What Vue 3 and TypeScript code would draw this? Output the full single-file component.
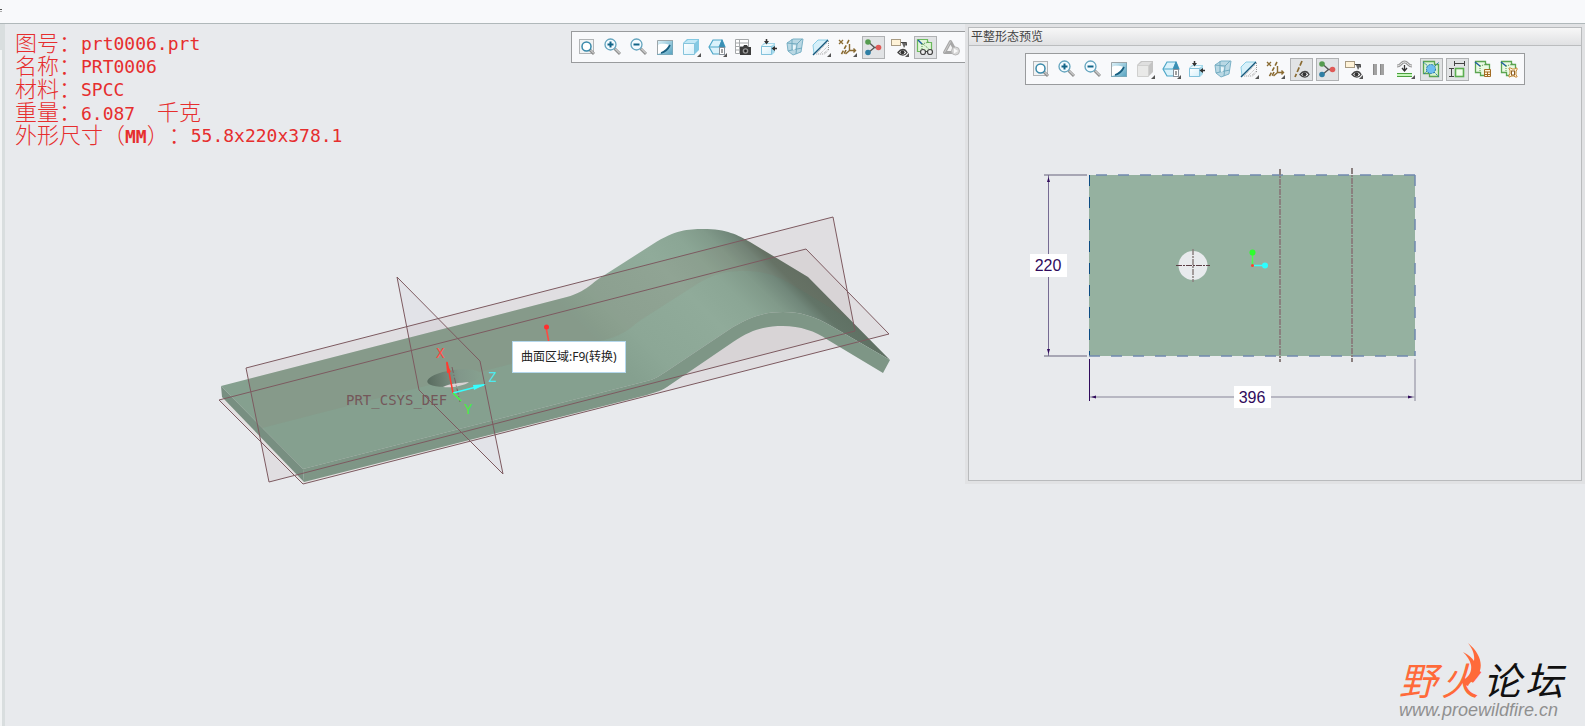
<script setup lang="ts">
interface Tool {
  icon: string
  label: string
  pressed?: boolean
}

interface InfoLine {
  label: string
  value: string
  unit?: string
}

const info: InfoLine[] = [
  { label: '图号：', value: 'prt0006.prt' },
  { label: '名称：', value: 'PRT0006' },
  { label: '材料：', value: 'SPCC' },
  { label: '重量：', value: '6.087  ', unit: '千克' },
]

const mainTools: Tool[] = [
  { icon: 'refit', label: '重新调整' },
  { icon: 'zoom-in', label: '放大' },
  { icon: 'zoom-out', label: '缩小' },
  { icon: 'repaint', label: '重画' },
  { icon: 'shading', label: '显示样式' },
  { icon: 'views', label: '已保存方向' },
  { icon: 'manager', label: '视图管理器' },
  { icon: 'normal', label: '视图法向' },
  { icon: 'perspective', label: '透视图' },
  { icon: 'section', label: '截面' },
  { icon: 'datum', label: '基准显示过滤器' },
  { icon: 'spin', label: '旋转中心', pressed: true },
  { icon: 'notes', label: '注释显示过滤器' },
  { icon: 'preview', label: '平整形态预览', pressed: true },
  { icon: 'simulate', label: '仿真' },
]

const previewTools: Tool[] = [
  { icon: 'refit', label: '重新调整' },
  { icon: 'zoom-in', label: '放大' },
  { icon: 'zoom-out', label: '缩小' },
  { icon: 'repaint', label: '重画' },
  { icon: 'shading-off', label: '显示样式' },
  { icon: 'views', label: '已保存方向' },
  { icon: 'normal', label: '视图法向' },
  { icon: 'perspective', label: '透视图' },
  { icon: 'section', label: '截面' },
  { icon: 'datum', label: '基准显示过滤器' },
  { icon: 'axis', label: '轴显示', pressed: true },
  { icon: 'spin', label: '旋转中心', pressed: true },
  { icon: 'notes', label: '注释显示过滤器' },
  { icon: 'pause', label: '暂停' },
  { icon: 'flatten', label: '展平' },
  { icon: 'stamp', label: '固定几何', pressed: true },
  { icon: 'dims', label: '边界框尺寸', pressed: true },
  { icon: 'table', label: '折弯顺序表' },
  { icon: 'outline', label: '轮廓' },
]
</script>

<template>
  <div class="app">
    <svg class="sprite" aria-hidden="true">
      <defs>
        <linearGradient id="g-blue" x1="0" y1="0" x2="1" y2="1">
          <stop offset="0" stop-color="#e4f5fb" /><stop offset="1" stop-color="#4f9fbe" />
        </linearGradient>
        <linearGradient id="g-face" x1="0" y1="0" x2="1" y2="1">
          <stop offset="0" stop-color="#ffffff" /><stop offset="1" stop-color="#d5effa" />
        </linearGradient>
      </defs>
      <symbol id="refit" viewBox="0 0 21 21">
        <rect x="2.5" y="2.5" width="14" height="14" fill="#f1f3f4" stroke="#b1b4b6" />
        <path d="M12.5 12.5l4.500 4.500" stroke="#8f8f8f" stroke-width="3" /><path d="M13 12.500l4 4" stroke="#e8e8e8" />
        <circle cx="9.500" cy="9.500" r="4.500" fill="#fff" stroke="#3989aa" stroke-width="1.500" />
      </symbol>
      <symbol id="zoom-in" viewBox="0 0 21 21">
        <path d="M11.500 11.500l5.500 5.500" stroke="#929292" stroke-width="3" /><path d="M12 11.500l5 5" stroke="#eee" />
        <circle cx="7.500" cy="7.500" r="5.500" fill="#f4fbff" stroke="#63a4be" stroke-width="1.300" />
        <path d="M4.500 7.500h6M7.500 4.500v6" stroke="#126488" stroke-width="2" />
      </symbol>
      <symbol id="zoom-out" viewBox="0 0 21 21">
        <path d="M11.500 11.500l5.500 5.500" stroke="#929292" stroke-width="3" /><path d="M12 11.500l5 5" stroke="#eee" />
        <circle cx="7.500" cy="7.500" r="5.500" fill="#f4fbff" stroke="#63a4be" stroke-width="1.300" />
        <path d="M4.500 7.500h6" stroke="#126488" stroke-width="2" />
      </symbol>
      <symbol id="repaint" viewBox="0 0 21 21">
        <rect x="2" y="3" width="16" height="15" fill="url(#g-blue)" />
        <path d="M3 8c3-2 8-1 12 0-2 4-5 7-9 8L3 17z" fill="#fff" />
        <path d="M2.500 18V3.500H18" fill="none" stroke="#9da5a8" /><path d="M2 17.500h16M17.500 4v14" stroke="#79a9bb" />
        <path d="M15 8c-2 4-5 7-9 8" fill="none" stroke="#185f80" stroke-width="1.800" />
      </symbol>
      <symbol id="shading" viewBox="0 0 21 21">
        <path d="M2 6l4-4h12v11l-4 4H2z" fill="#83c9e3" /><path d="M2.500 6.500h11v11h-11z" fill="url(#g-face)" stroke="#86c4dc" />
        <path d="M3 6l4-3h10l-3 3z" fill="#c2e8f6" /><path d="M20 16v4h-4z" fill="#555" />
      </symbol>
      <symbol id="shading-off" viewBox="0 0 21 21">
        <path d="M2 6l4-4h12v11l-4 4H2z" fill="#c4c4c4" /><path d="M2.500 6.500h11v11h-11z" fill="#e9e9e8" stroke="#d0d0cf" />
        <path d="M3 6l4-3h10l-3 3z" fill="#dfdfdf" /><path d="M20 16v4h-4z" fill="#555" />
      </symbol>
      <symbol id="views" viewBox="0 0 21 21">
        <path d="M2 10l4-7h9l3 7-4 7H6z" fill="#daf2fb" stroke="#4ca6c7" stroke-width="1.200" />
        <path d="M2 10h10M12 10l3-7v13" fill="none" stroke="#4ca6c7" /><path d="M12 10l3-8 3 8z" fill="#3a8fb4" />
        <rect x="12.500" y="10.500" width="5" height="7" fill="#fff" stroke="#88919a" /><path d="M14 13h2M14 15h2" stroke="#444" />
        <path d="M20 16v4h-4z" fill="#555" />
      </symbol>
      <symbol id="manager" viewBox="0 0 21 21">
        <path d="M2.500 2.500h13v14h-13zM2 6h14M2 9.500h14M2 13h14M6.500 2v15" fill="#fff" stroke="#a5a8aa" />
        <path d="M7 10h3l1-2h3l1 2h3v8H7z" fill="#3d3d3d" /><circle cx="12.500" cy="14" r="2.800" fill="#999" /><circle cx="12.500" cy="14" r="1.400" fill="#222" />
      </symbol>
      <symbol id="normal" viewBox="0 0 21 21">
        <path d="M2 9l3-3h11v9l-3 3H2z" fill="#a5d8ea" /><path d="M2.500 9.500h10v8h-10z" fill="url(#g-face)" stroke="#83c2dc" /><path d="M3 9l3-2h9l-3 2z" fill="#f0fafd" />
        <path d="M7.500 2v4M18 11.500h-4" stroke="#333" stroke-width="1.500" /><path d="M5 4h5l-2.500 3.500zM16 9v5l-3.500-2.500z" fill="#333" />
      </symbol>
      <symbol id="perspective" viewBox="0 0 21 21">
        <path d="M2 6l6-4h10l-2 13-8 3-5-4z" fill="#b9d8e4" stroke="#7bb2c7" /><path d="M2 6l10 1 5-5M12 7l-1 10M7 2v11l-4 1M7 13l10-2" fill="none" stroke="#72abc0" />
        <path d="M8 8l3 .5-1 4-2 .5z" fill="#eaf6fa" />
      </symbol>
      <symbol id="section" viewBox="0 0 21 21">
        <path d="M2 8l5-5h10L3 17z" fill="#d6f0fa" stroke="#8acde4" /><path d="M17.500 4v9l-4 4H5" fill="none" stroke="#999" stroke-dasharray="1 1" />
        <path d="M8 14l8-8M10 16l7-7M6 16l3-3M13 16l4-4" stroke="#bbb" stroke-dasharray="1 1" />
        <path d="M2 18L17 3" stroke="#16597c" stroke-width="1.500" /><path d="M20 16v4h-4z" fill="#555" />
      </symbol>
      <symbol id="datum" viewBox="0 0 21 21">
        <path d="M2 3l4 4M6 3L2 7" stroke="#8a6b32" stroke-width="1.300" /><path d="M12 3L4 18M9 13l-2 4" stroke="#8a6b32" stroke-width="1.600" stroke-dasharray="4 2" />
        <path d="M12.500 7v6.500h6M12.500 13.500l-4 3.500M16.500 11.500l2 2-2 2" fill="none" stroke="#8a6b32" stroke-width="1.400" /><path d="M20 16v4h-4z" fill="#555" />
      </symbol>
      <symbol id="spin" viewBox="0 0 21 21">
        <path d="M5.500 5l6 5.500-6 5M11.500 10.500h5" fill="none" stroke="#555" stroke-width="1.300" />
        <circle cx="5" cy="5" r="2.800" fill="#559b4f" /><circle cx="5" cy="15.500" r="2.800" fill="#2f7fa4" /><circle cx="15.500" cy="10.500" r="2.800" fill="#df5a57" />
      </symbol>
      <symbol id="notes" viewBox="0 0 21 21">
        <rect x="2.500" y="2.500" width="9" height="6" fill="#fff3d8" stroke="#a89b83" /><path d="M12 5.500h5.500v3" fill="none" stroke="#444" /><path d="M13 6h5l-3 5z" fill="#666" />
        <path d="M9 15.500c3-4 7-4 9 0-2 3.500-6 3.500-9 0z" fill="#fff" stroke="#444" stroke-width="1.300" /><circle cx="13.500" cy="15.300" r="2" fill="#333" /><path d="M20 16v4h-4z" fill="#555" />
      </symbol>
      <symbol id="preview" viewBox="0 0 21 21">
        <path d="M2.500 2.500h10v3h4v9h-14z" fill="#e2f6da" stroke="#6cba5d" stroke-width="1.200" /><path d="M3 3l4 4" stroke="#1d5da0" stroke-width="1.500" /><path d="M7 7l7-2M7 7v7M8 7l6 5" stroke="#579450" stroke-dasharray="1 1" />
        <circle cx="8" cy="15" r="2.500" fill="#eee" stroke="#444" stroke-width="1.200" /><circle cx="15" cy="15" r="2.500" fill="#eee" stroke="#444" stroke-width="1.200" /><path d="M10 14.500h3" stroke="#444" />
      </symbol>
      <symbol id="simulate" viewBox="0 0 21 21">
        <path d="M9.500 4.500l-6 11h12z" fill="#f3f3f3" stroke="#a7a7a7" stroke-width="3" stroke-linejoin="round" /><path d="M9.500 4.500l-6 11" stroke="#ccc" />
        <circle cx="14.500" cy="14" r="4" fill="#d8d8d8" stroke="#b8b8b8" /><path d="M13 11.500l4 2.500-4 2.500z" fill="#fafafa" />
      </symbol>
      <symbol id="axis" viewBox="0 0 21 21">
        <path d="M11 2L4 18" stroke="#8a6b32" stroke-width="1.700" stroke-dasharray="5 2" />
        <path d="M9 15.500c3-4 7-4 9 0-2 3.500-6 3.500-9 0z" fill="#fff" stroke="#444" stroke-width="1.300" /><circle cx="13.500" cy="15.300" r="2" fill="#333" />
      </symbol>
      <symbol id="pause" viewBox="0 0 21 21">
        <path d="M4 5h4v11H4zM11 5h4v11h-4z" fill="#a2a2a2" /><path d="M4 5h1v11H4zM11 5h1v11h-1z" fill="#888" />
      </symbol>
      <symbol id="flatten" viewBox="0 0 21 21">
        <path d="M2 7c4 0 4-4 7.500-4S13 7 17 7" fill="none" stroke="#999" stroke-width="3" /><path d="M2 7c4 0 4-4 7.500-4S13 7 17 7" fill="none" stroke="#e4e4e4" />
        <path d="M9.500 6v6M7 9l2.500 3L12 9" stroke="#333" stroke-width="1.300" fill="none" /><path d="M2 14.500h15M2 17.500h15" stroke="#4a9f3e" /><path d="M2 16h15" stroke="#c6f7ba" stroke-width="2" /><path d="M20 16v4h-4z" fill="#555" />
      </symbol>
      <symbol id="stamp" viewBox="0 0 21 21">
        <path d="M2.500 2.500h11v3h4v12h-9v-3h-6z" fill="#d8f3cf" stroke="#5ba551" stroke-width="1.300" /><path d="M2 3l5 4M13 13l5 5M14 7l4-4M3 15l4-4" stroke="#2776ad" stroke-dasharray="2 1" />
        <circle cx="10" cy="10" r="4.500" fill="#6dbdf0" stroke="#2876a8" stroke-dasharray="2 1" />
      </symbol>
      <symbol id="dims" viewBox="0 0 21 21">
        <rect x="8.500" y="9.500" width="8" height="8" fill="#effde9" stroke="#5bae50" stroke-width="1.600" />
        <path d="M7.500 2v5M17.500 2v5M8 4.500h10M2 9.500h5M2 17.500h5M4.500 9v9" stroke="#444" />
      </symbol>
      <symbol id="table" viewBox="0 0 21 21">
        <path d="M2.500 2.500h10v3h4v8h-4v3h-5v-3h-5z" fill="#e9f9e3" stroke="#5ba551" stroke-width="1.300" /><path d="M2 3l5 4" stroke="#1d5da0" stroke-width="1.500" /><path d="M7 7l7-2M7 7v6" stroke="#579450" stroke-dasharray="1 1" />
        <path d="M11.500 10.500h6v7h-6zM11 13h7M11 15.500h7M14.500 13v5" fill="#fff2da" stroke="#a36c24" />
      </symbol>
      <symbol id="outline" viewBox="0 0 21 21">
        <path d="M2.500 2.500h10v3h4v8h-4v3h-5v-3h-5z" fill="#e9f9e3" stroke="#5ba551" stroke-width="1.300" /><path d="M2 3l5 4" stroke="#1d5da0" stroke-width="1.500" /><path d="M7 7l7-2M7 7v6" stroke="#579450" stroke-dasharray="1 1" />
        <path d="M10 9h2l1 1h3l1-1h1v2l-1 1v4l1 1v1h-2l-1-1h-3l-1 1h-1v-2l1-1v-4l-1-1z" fill="#fff2da" stroke="#c98d3c" /><rect x="12.500" y="12" width="3" height="4" fill="#fff" stroke="#8c5e22" />
      </symbol>
    </svg>

    <header class="topbar"><span class="tick"></span></header>

    <div class="workspace">
      <main class="stage">
        <div class="rail"></div>
        <section class="viewport" aria-label="零件视图">
          <svg class="drawing" viewBox="5 24 960 702" role="img" aria-label="PRT0006">
            <defs>
              <linearGradient id="skin" gradientUnits="userSpaceOnUse" x1="221" y1="386" x2="571" y2="36">
                <stop offset="0" stop-color="#85a08f" /><stop offset="0.600" stop-color="#85a08f" />
                <stop offset="0.670" stop-color="#8ca796" /><stop offset="0.800" stop-color="#90ab9a" />
                <stop offset="0.865" stop-color="#8ba695" /><stop offset="0.910" stop-color="#819a8a" />
                <stop offset="0.945" stop-color="#71877a" /><stop offset="0.965" stop-color="#627467" />
                <stop offset="1" stop-color="#5f7063" />
              </linearGradient>
              <linearGradient id="bore" x1="0" x2="1" y1="0" y2="0">
                <stop offset="0" stop-color="#586b5f" /><stop offset="0.250" stop-color="#6a7d70" />
                <stop offset="0.600" stop-color="#81978a" /><stop offset="1" stop-color="#86a08f" />
              </linearGradient>
              <clipPath id="far-half">
                <path d="M221 386L563 298C585 293 590 284 603 276L653 244C675 230 688 229 703 229C727 229 738 235 750 242L808 277L849 319L791 284C779 277 768 271 744 271C729 271 716 272 694 286L644 318C631 326 626 335 604 340L262 428Z" />
              </clipPath>
            </defs>
            <g class="plane">
              <path d="M246 368L833 217L855 331L269 482Z" />
              <path d="M219 400L806 249L889 334L303 484Z" />
              <path class="faint" d="M397 277L480 361L503 474L419 390Z" />
            </g>
            <path d="M222 398L303 483L655 393" fill="none" stroke="#e3e1e0" stroke-width="2" />
            <path fill="url(#skin)" d="M221 386L563 298C585 293 590 284 603 276L653 244C675 230 688 229 703 229C727 229 738 235 750 242L808 277L890 360L833 327C815 316 800 312 783 312C765 312 752 316 733 327L667 371C658 377 655 379 647 381L303 469Z" />
            <path fill="#788f81" d="M221 386L303 469L304 482L222 397Z" />
            <path fill="#7e9686" d="M303 469L647 381C655 379 658 377 667 371L733 327C752 316 765 312 783 312C800 312 815 316 833 327L890 360L883 373L828 340C815 331 800 326 783 326C766 326 752 329 733 342L667 387C659 392 655 392 647 395L304 482Z" />
            <path class="tint" clip-path="url(#far-half)" d="M246 368L833 217L855 331L269 482Z" />
            <ellipse cx="454" cy="378" rx="27" ry="8" transform="rotate(-8 454 378)" fill="url(#bore)" />
            <path d="M443 387C450 383 460 383 469 382C464 386 452 388 443 387Z" fill="#d9d3d4" />
            <g class="plane-edge">
              <path d="M246 368L833 217L855 331L269 482Z" />
              <path d="M219 400L806 249L889 334L303 484Z" />
              <path d="M397 277L480 361L503 474L419 390Z" />
              <path d="M452 367L460 402" stroke-dasharray="6 2 1 2" />
            </g>
            <text class="csys" x="346" y="405">PRT_CSYS_DEF</text>
            <g fill="none" stroke-width="1.500">
              <path d="M453 393L447 362" stroke="#ff3b30" /><path d="M453 393L484 385" stroke="#35ffff" /><path d="M453 393L461 401" stroke="#3cff3c" />
            </g>
            <path d="M446 361L451 372L447 373Z" fill="#ff3b30" /><path d="M486 384L473 385L474 390Z" fill="#35ffff" />
            <text class="axis-name" x="436" y="358" fill="#ff4a42">X</text>
            <text class="axis-name" x="488" y="382" fill="#4fe9ee">Z</text>
            <text class="axis-name" x="464" y="414" fill="#45ee45">Y</text>
            <path d="M546 327L549 343" stroke="#ff4a42" stroke-width="1.500" /><circle cx="546.500" cy="327" r="2.500" fill="#ff2f2f" />
          </svg>

          <dl class="info">
            <div v-for="line in info" :key="line.label" class="row">
              <dt>{{ line.label }}</dt>
              <dd>{{ line.value }}<span v-if="line.unit" class="unit">{{ line.unit }}</span></dd>
            </div>
            <div class="row">
              <dt>外形尺寸（<b>MM</b>）：</dt>
              <dd>55.8x220x378.1</dd>
            </div>
          </dl>

          <div class="toolbar open-end" role="toolbar" aria-label="图形工具栏">
            <button v-for="tool in mainTools" :key="tool.icon" type="button" :class="{ pressed: tool.pressed }" :aria-label="tool.label" :aria-pressed="tool.pressed">
              <svg><use :href="'#' + tool.icon" /></svg>
            </button>
          </div>

          <div class="tip" role="tooltip">曲面区域:F9(转换)</div>
        </section>
      </main>

      <aside class="dock">
        <section class="panel">
          <h2>平整形态预览</h2>
          <div class="bar">
            <div class="toolbar" role="toolbar" aria-label="预览工具栏">
              <button v-for="tool in previewTools" :key="tool.icon" type="button" :class="{ pressed: tool.pressed }" :aria-label="tool.label" :aria-pressed="tool.pressed">
                <svg><use :href="'#' + tool.icon" /></svg>
              </button>
            </div>
          </div>
          <svg class="drawing" viewBox="969 85 612 395" role="img" aria-label="展平尺寸 396 × 220">
            <rect x="1089" y="175" width="326" height="181" fill="#95b1a0" />
            <g fill="none" stroke-dasharray="11 11">
              <path d="M1089.500 175V356" stroke="#0b4b82" />
              <path d="M1096 175H1415M1089 356H1415M1415 175V356" stroke="#7089ae" stroke-width="1.500" />
            </g>
            <circle cx="1193" cy="265.500" r="14.500" fill="#e8eaed" />
            <g fill="none" stroke="#8a807f" stroke-width="2" stroke-dasharray="6 1 2 1">
              <path d="M1280 169V362M1352 168V362" />
              <path d="M1193 249V282" stroke-width="1.500" />
              <path d="M1176 265.500H1210" stroke="#5d3e46" stroke-width="1" />
            </g>
            <g fill="none" stroke="#a7a6b4" stroke-width="2">
              <path d="M1044 175H1087M1044 356H1087" /><path d="M1415 359V401M1090 397H1415" stroke-width="1.500" />
              <path d="M1048.500 175V356" stroke="#766b93" stroke-width="1" /><path d="M1089.500 359V401" stroke="#300b5c" stroke-width="1" />
            </g>
            <path d="M1047 182L1048.500 177L1050 182ZM1047 349L1048.500 354L1050 349ZM1096 395.500L1091 397L1096 398.500ZM1408 395.500L1413 397L1408 398.500Z" fill="#300b5c" />
            <path d="M1252.500 265V254" stroke="#4dff4d" stroke-width="1.500" /><path d="M1253 265.500H1265" stroke="#35ffff" stroke-width="1.500" />
            <circle cx="1252.500" cy="265.500" r="1.500" fill="#ff4030" /><circle cx="1252.500" cy="252.500" r="3" fill="#2dff2d" /><circle cx="1265" cy="265.500" r="3" fill="#2dffff" />
            <rect x="1030" y="254" width="37" height="23" fill="#fff" /><rect x="1234" y="386" width="37" height="22" fill="#fff" />
            <text class="dim" x="1048" y="271">220</text><text class="dim" x="1252" y="403">396</text>
          </svg>
        </section>
      </aside>

      <a class="brand" href="#" aria-label="野火论坛 www.proewildfire.cn">
        <span class="name">
          <span class="fire">野</span><span class="fire">火</span><span>论</span><span>坛</span>
          <svg class="flame" viewBox="0 0 20 44"><path d="M5 0C17 10 21 22 15 32C11 37 7 39 5 43C1 42-1 39 1 37C6 33 9 29 8 22C7 17 4 13 0 9C6 12 9 15 11 18C12 11 9 5 5 0Z" fill="#ff6a3a" /></svg>
        </span>
        <span class="url">www.proewildfire.cn</span>
      </a>
    </div>
  </div>
</template>

<style>
html,
body {
  background: #e8eaed;
}
</style>

<style scoped>
.app {
  min-height: 100vh;
  display: flex;
  flex-direction: column;
  overflow: hidden;
  font-family: "Noto Sans", "Noto Sans CJK SC", sans-serif;
  background: #e8eaed;
}

.sprite {
  position: absolute;
  width: 0;
  height: 0;
}

.topbar {
  height: 14px;
  padding-top: 9px;
  border-bottom: 1px solid #b0b8ba;
  background: #f8f9fb;
}

.tick {
  display: block;
  width: 2px;
  height: 1px;
  border-top: 1px solid #555;
  border-bottom: 1px solid #aaa;
}

.workspace {
  position: relative;
  flex: 1;
  display: grid;
  grid-template-columns: 193fr 124fr;
  align-items: start;
}

.stage {
  display: flex;
  align-self: stretch;
  min-width: 0;
}

.rail {
  width: 3px;
  margin-top: 26px;
  border-left: 2px solid #f2f4f5;
  background: #d9dedf;
  box-shadow: 0 -26px 0 #d9dedf;
}

.viewport {
  position: relative;
  flex: 1;
  min-width: 0;
}

.drawing {
  display: block;
  width: 100%;
}

.plane {
  fill: rgba(143, 112, 108, 0.09);
}

.plane .faint {
  fill: rgba(143, 120, 150, 0.06);
}

.tint {
  fill: rgba(143, 100, 92, 0.09);
}

.plane-edge {
  fill: none;
  stroke: #7d5a60;
  stroke-width: 1;
}

.csys,
.axis-name {
  font-family: "DejaVu Sans Mono", monospace;
  font-size: 14px;
}

.csys {
  fill: #74575a;
}

.info {
  position: absolute;
  top: 8px;
  left: 10px;
  margin: 0;
  color: #e62e2e;
  font: 18px/23px "DejaVu Sans Mono", "Noto Sans CJK SC", monospace;
  text-spacing-trim: space-all;
}

.row {
  display: flex;
  height: 23px;
}

dt,
dd {
  margin: 0;
  white-space: pre;
}

dt,
.unit {
  font-size: 22px;
  font-weight: 300;
}

dt b {
  font-size: 18px;
  font-weight: 700;
}

.toolbar {
  display: flex;
  gap: 3px;
  padding: 4px 3px 3px 4px;
  border: 1px solid #999b9d;
  background: #f8f9fb;
}

.open-end {
  position: absolute;
  top: 7px;
  right: 0;
  padding-right: 2px;
  border-right: 0;
}

.toolbar button {
  width: 23px;
  height: 23px;
  padding: 0;
  border: 1px solid transparent;
  background: transparent;
}

.toolbar button.pressed {
  border-color: #b0b2b4;
  background: #e1e3e5;
}

.toolbar svg {
  display: block;
  width: 21px;
  height: 21px;
}

.tip {
  position: absolute;
  top: 317px;
  left: 507px;
  padding: 0 8px;
  border: 1px solid #b4d7ec;
  background: #fff;
  color: #222;
  font-size: 12px;
  line-height: 30px;
  white-space: nowrap;
}

.dock {
  padding: 3px;
  background: #e1e2e4;
}

.panel {
  border: 1px solid #b9bbbd;
  background: #e8eaed;
}

h2 {
  height: 17px;
  margin: 0;
  padding-left: 2px;
  border-bottom: 1px solid #bbbdbf;
  background: linear-gradient(#f7f7f7, #e0e1e3);
  color: #444;
  font-size: 12px;
  font-weight: 400;
  line-height: 17px;
}

.bar {
  display: flex;
  justify-content: center;
  padding-top: 7px;
}

.dim {
  fill: #300b5c;
  font-family: "Liberation Sans", Arial, sans-serif;
  font-size: 16px;
  text-anchor: middle;
}

.brand {
  position: absolute;
  right: 22px;
  bottom: 6px;
  display: flex;
  flex-direction: column;
  color: #111;
  text-decoration: none;
}

.name {
  position: relative;
  display: flex;
  gap: 4px;
  font-family: "Noto Sans CJK SC", sans-serif;
  font-size: 38px;
  font-style: italic;
  font-weight: 400;
  line-height: 42px;
}

.fire {
  color: #ff6a3a;
}

.flame {
  position: absolute;
  top: -15px;
  left: 64px;
  width: 20px;
  height: 44px;
}

.url {
  color: #909090;
  font: italic 18px/20px "Liberation Sans", Arial, sans-serif;
}
</style>
